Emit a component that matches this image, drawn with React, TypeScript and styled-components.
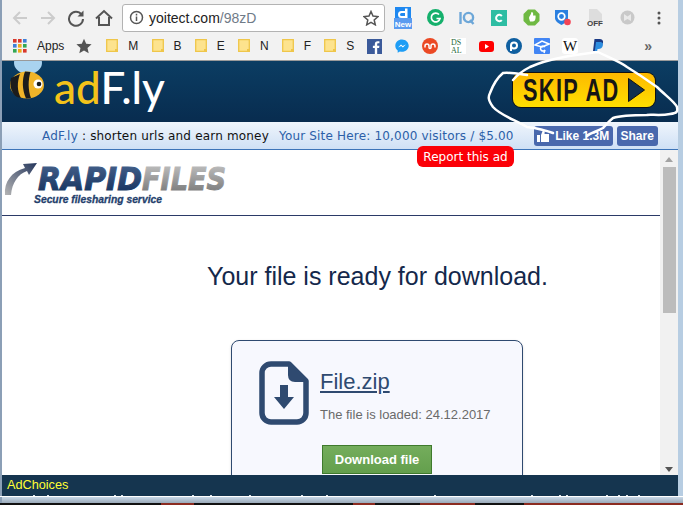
import React from "react";
import styled, { createGlobalStyle } from "styled-components";

const Global = createGlobalStyle`
  html, body { margin: 0; padding: 0; background: #b7cde2; }
  body { width: 683px; height: 505px; overflow: hidden; font-family: "Liberation Sans", Arial, sans-serif; }
  * { box-sizing: border-box; }
`;
const Screen = styled.div`
  position: relative; width: 683px; height: 505px; display: flex; flex-direction: column; overflow: hidden;
  background: linear-gradient(90deg, #8b9fb6 0, #8b9fb6 2px, #b7cde2 2px);
`;
const Win = styled.div`
  margin-left: 2px; width: 676px; height: 496px; display: flex; flex-direction: column; background: #fff; flex: none;
`;
const Chrome = styled.div`
  height: 60px; background: #f2f2f2; display: flex; flex-direction: column; flex: none; padding-top: 3px;
`;
const NavRow = styled.div`
  height: 29px; display: flex; align-items: center; padding-left: 4px; flex: none;
`;
const NavBtn = styled.div`
  width: 28px; height: 28px; display: flex; align-items: center; justify-content: center; flex: none;
`;
const Omni = styled.div`
  width: 263px; height: 28px; margin-left: 4px; background: #fff; border: 1px solid #b3b3b3; border-radius: 3px;
  display: flex; align-items: center; padding: 0 5px 0 6px; flex: none;
  font-size: 14px; color: #222;
`;
const Host = styled.span` margin-left: 5px; `;
const Path = styled.span` color: #6f7b88; flex: 1; `;
const Exts = styled.div` display: flex; margin-left: 2px; align-items: center; `;
const Ext = styled.div`
  width: 32px; height: 28px; display: flex; align-items: center; justify-content: center; flex: none;
`;
const BookRow = styled.div`
  height: 28px; display: flex; align-items: center; padding-left: 11px; font-size: 12px; color: #222; flex: none;
`;
const AppsLabel = styled.span` margin-left: 10px; margin-right: 12px; `;
const StarCell = styled.div` width: 16px; display: flex; margin-right: 14px; `;
const Folders = styled.div` display: flex; gap: 13.2px; `;
const Folder = styled.div` display: flex; align-items: center; gap: 10px; `;
const Favs = styled.div` display: flex; margin-left: 6px; `;
const Fav = styled.div`
  width: 28px; height: 20px; display: flex; align-items: center; justify-content: center; flex: none;
`;
const Chevrons = styled.span`
  margin-left: 32px; color: #666; font-size: 14px; font-weight: bold; letter-spacing: -1px;
`;
const Banner = styled.div`
  height: 62px; flex: none; display: flex; justify-content: space-between;
  background: linear-gradient(180deg, #0b3d63 0, #082c4f 100%); padding: 0 23px 0 6px; overflow: hidden;
  border-top: 1px solid #9a9a9a;
`;
const Brand = styled.div` display: flex; gap: 8px; height: 100%; `;
const Logo = styled.div`
  font-family: "Lato", "Liberation Sans", sans-serif; font-size: 44px; line-height: 44px; font-weight: 500;
  color: #fff; margin-top: 4px;
`;
const Gold = styled.span` color: #f4c31a; `;
const Skip = styled.div`
  width: 142px; height: 34px; margin-top: 12px; border-radius: 8px; background: linear-gradient(180deg, #fdb900, #ffdf00);
  box-shadow: 0 0 0 1px #111; display: flex; align-items: center; padding-left: 10px; gap: 8px; overflow: hidden;
`;
const SkipSlot = styled.div` width: 97px; height: 30px; flex: none; `;
const SkipText = styled.div`
  width: 144px; font-weight: bold; font-size: 32px; line-height: 30px; letter-spacing: 2px; color: #151515; white-space: nowrap;
  transform: scaleX(.68); transform-origin: left;
`;
const Slogan = styled.div`
  height: 28px; flex: none; display: flex; align-items: center; padding-left: 40px;
  background: linear-gradient(180deg, #eff5fc, #cfe0f5); border-bottom: 1px solid #3d74b8;
  font-family: "DejaVu Sans", sans-serif; font-size: 12px; letter-spacing: .18px; color: #111;
`;
const Blue = styled.span` color: #2c5fa8; `;
const SiteAd = styled(Blue)` margin-left: 10px; `;
const FbBtns = styled.div` display: flex; gap: 4px; margin-left: 20px; `;
const FbBtn = styled.div<{ $w: number }>`
  width: ${p => p.$w}px; height: 20px; background: #4968ad; border-radius: 3px; color: #fff;
  font-family: "Liberation Sans", sans-serif; font-weight: bold; font-size: 12px; letter-spacing: 0;
  display: flex; align-items: center; justify-content: center; gap: 6px;
`;
const Report = styled.div`
  position: absolute; left: 417px; top: 146px; width: 97px; height: 21px; background: #fb0007; border-radius: 6px;
  color: #fff; font-family: "DejaVu Sans", sans-serif; font-size: 12px; display: flex; align-items: center; justify-content: center;
`;
const Body = styled.div` flex: 1; min-height: 0; display: flex; overflow: hidden; `;
const Main = styled.div` flex: 1; min-width: 0; display: flex; flex-direction: column; overflow: hidden; `;
const Header = styled.div`
  height: 66px; flex: none; border-bottom: 1px solid #2b3a67; padding: 10px 0 0 1px; display: flex; align-items: flex-start;
`;
const Title = styled.h1`
  margin: 46px 0 0 0; padding-left: 205px; font-size: 25px; line-height: 28px; font-weight: normal; color: #14284b; white-space: nowrap;
`;
const Card = styled.div`
  margin: 50px 0 0 229px; width: 292px; height: 180px; flex: none; background: #f7f8fe; border: 1px solid #2f4a70; border-radius: 8px;
  padding: 20px 0 0 27px; box-shadow: 0 1px 3px #0002;
`;
const FileRow = styled.div` display: flex; gap: 11px; `;
const FileInfo = styled.div` display: flex; flex-direction: column; `;
const FileLink = styled.a`
  font-size: 22px; line-height: 26px; color: #2f4a70; text-decoration: underline; margin-top: 8px;
`;
const Loaded = styled.div` font-size: 13px; line-height: 16px; color: #6a6a6a; margin-top: 12px; `;
const DlBtn = styled.div`
  width: 110px; height: 29px; margin: 20px 0 0 63px; background: linear-gradient(180deg, #74ad5c, #649f4d); border: 1px solid #3f7a2d;
  color: #fff; font-weight: bold; font-size: 13px; display: flex; align-items: center; justify-content: center;
`;
const Scrollbar = styled.div`
  width: 18px; flex: none; background: #f1f1f1; display: flex; flex-direction: column; align-items: center; padding: 7px 0 3px;
`;
const Thumb = styled.div` width: 13px; height: 146px; background: #bcbcbc; margin-top: 5px; `;
const Spacer = styled.div` flex: 1; `;
const Arrow = styled.div<{ $up?: boolean }>`
  width: 0; height: 0; border-left: 4px solid transparent; border-right: 4px solid transparent;
  ${p => p.$up ? "border-bottom: 5px solid #a3a3a3;" : "border-top: 5px solid #555;"}
`;
const AdChoices = styled.div`
  height: 19px; flex: none; background: #15354f; color: #ffff33; font-size: 12.7px; padding-left: 5px; display: flex; align-items: center;
`;
const Specks = styled.svg` display: block; height: 2px; width: 676px; flex: none; background: #15354f; `;
const Edge = styled.div` height: 1px; flex: none; background: #fff; `;
const Fade = styled.div` height: 6px; flex: none; background: linear-gradient(180deg, #c9d9e9, #9aa9b8); margin-left: 2px; `;
const Task = styled.div`
  height: 2px; flex: none;
  background: linear-gradient(90deg, #111 161px, #8b2b20 161px, #8b2b20 194px, #111 194px, #111 353px, #8b2b20 353px, #8b2b20 375px, #111 375px, #111 420px, #8b2b20 420px, #8b2b20 475px, #111 475px, #111 524px, #8b2b20 524px);
`;
const Scribble = styled.svg`
  position: absolute; left: 480px; top: 45px; width: 203px; height: 95px; pointer-events: none;
`;
const BeeBox = styled.svg` flex: none; `;

const Back = () => (
  <svg width="18" height="18" viewBox="0 0 18 18" fill="none" stroke="#ccc" strokeWidth="2"><path d="M16 9H3M9 3L3 9l6 6" /></svg>
);
const Forward = () => (
  <svg width="18" height="18" viewBox="0 0 18 18" fill="none" stroke="#ccc" strokeWidth="2"><path d="M2 9h13M9 3l6 6-6 6" /></svg>
);
const Reload = () => (
  <svg width="18" height="18" viewBox="0 0 18 18" fill="none"><path d="M14.5 5.5A7 7 0 1 0 16 10" stroke="#555" strokeWidth="2" /><path d="M16.5 1.5v6h-6z" fill="#555" /></svg>
);
const Home = () => (
  <svg width="18" height="18" viewBox="0 0 18 18" fill="none" stroke="#555" strokeWidth="2"><path d="M1 9.5L9 2l8 7.5M4 8v8h10V8" /></svg>
);
const Info = () => (
  <svg width="15" height="15" viewBox="0 0 15 15" fill="none"><circle cx="7.5" cy="7.5" r="6" stroke="#555" strokeWidth="1.5" /><path d="M7.5 6.5v4.5M7.5 3.8v1.6" stroke="#555" strokeWidth="1.5" /></svg>
);
const StarO = () => (
  <svg width="16" height="16" viewBox="0 0 16 16" fill="none" stroke="#555" strokeWidth="1.5"><path d="M8 1.5l2 4.6 5 .5-3.8 3.3 1.1 4.9L8 12.3l-4.3 2.5 1.1-4.9L1 6.6l5-.5z" /></svg>
);
const AppsIcon = () => (
  <svg width="14" height="14" viewBox="0 0 14 14">
    {["#d9382c", "#d9382c", "#3c7fd9", "#3c7fd9", "#f0a91c", "#33a853", "#33a853", "#f0a91c", "#d9382c"].map((c, i) => (
      <rect key={i} x={(i % 3) * 5} y={Math.floor(i / 3) * 5} width="3.6" height="3.6" fill={c} />
    ))}
  </svg>
);
const StarF = () => (
  <svg width="16" height="16" viewBox="0 0 16 16" fill="#555"><path d="M8 .8l2.2 5 5.4.5-4.1 3.6 1.2 5.3L8 12.4l-4.7 2.8 1.2-5.3L.4 6.3l5.4-.5z" /></svg>
);
const FolderIcon = () => (
  <svg width="12" height="14" viewBox="0 0 12 14"><path d="M.7.7h10.6v11.6H.7z" fill="#fde38e" stroke="#efc64a" strokeWidth="1.3" /><rect x="9" y="10" width="3" height="3" fill="#efc64a" /></svg>
);
const speckX = [31, 45, 112, 119, 190, 208, 247, 299, 324, 432, 529, 557, 564, 604, 616, 624, 636];

export default function App() {
  return (
    <Screen>
      <Global />
      <Win>
        <Chrome>
          <NavRow>
            <NavBtn><Back /></NavBtn>
            <NavBtn><Forward /></NavBtn>
            <NavBtn><Reload /></NavBtn>
            <NavBtn><Home /></NavBtn>
            <Omni>
              <Info />
              <Host>yoitect.com</Host>
              <Path>/98zD</Path>
              <StarO />
            </Omni>
            <Exts>
              <Ext>
                <svg width="18" height="22" viewBox="0 0 18 22">
                  <rect x="1" width="16" height="12" fill="#1e88f0" />
                  <path d="M11 1.500h2.500V11H7.500a3.500 3.500 0 0 1 0-7H11zM7.500 6a1.500 1.500 0 0 0 0 3H11V6z" fill="#fff" />
                  <rect y="11" width="18" height="11" fill="#5a9bf0" />
                  <text x="9" y="20" textAnchor="middle" fontSize="8" fontWeight="bold" fill="#fff" fontFamily="Liberation Sans">New</text>
                </svg>
              </Ext>
              <Ext>
                <svg width="17" height="17" viewBox="0 0 17 17"><circle cx="8.5" cy="8.5" r="8.5" fill="#15b06c" /><path d="M12 5.5A4.4 4.4 0 1 0 13 9.5H9.5" fill="none" stroke="#fff" strokeWidth="1.7" /></svg>
              </Ext>
              <Ext>
                <svg width="16" height="14" viewBox="0 0 16 14" fill="none" stroke="#6da7d8" strokeWidth="2.4"><path d="M1.5 1v12" /><circle cx="9.5" cy="6.5" r="4.6" /><path d="M11 9l3.5 4" /></svg>
              </Ext>
              <Ext>
                <svg width="16" height="16" viewBox="0 0 16 16"><rect width="16" height="16" fill="#2ebda3" /><path d="M10.8 6a3.2 3.2 0 1 0 0 4" fill="none" stroke="#fff" strokeWidth="2" /></svg>
              </Ext>
              <Ext>
                <svg width="17" height="17" viewBox="0 0 17 17"><path d="M5 .5h7L16.500 5v7L12 16.500H5L.5 12V5z" fill="#6fb943" /><path d="M6 9c0-2 2-3 2.500-6 1.500 0 2 1.500 1.500 3.500h2.500c.5 3-.5 6-2.500 6H7z" fill="#fff" /></svg>
              </Ext>
              <Ext>
                <svg width="18" height="18" viewBox="0 0 18 18"><path d="M1 1h13v8c0 3-3 5-6.500 7C4 14 1 12 1 9z" fill="#2a7fe0" /><circle cx="7.500" cy="7.500" r="3.300" fill="none" stroke="#fff" strokeWidth="1.700" /><circle cx="13.500" cy="13" r="3.300" fill="#f44455" /></svg>
              </Ext>
              <Ext>
                <svg width="16" height="18" viewBox="0 0 16 18"><path d="M2 0h8l5 5v9H2z" fill="#ddd" /><text x="8" y="17" textAnchor="middle" fontSize="8" fontWeight="bold" fill="#444" fontFamily="Liberation Sans">OFF</text></svg>
              </Ext>
              <Ext>
                <svg width="15" height="15" viewBox="0 0 15 15"><circle cx="7.500" cy="7.500" r="7" fill="#c9c9c9" /><path d="M4 4l3.500 2.500L11 4v7l-3.500-2L4 11z" fill="#e9e9e9" /></svg>
              </Ext>
              <Ext>
                <svg width="4" height="14" viewBox="0 0 4 14" fill="#555"><circle cx="2" cy="2" r="1.500" /><circle cx="2" cy="7" r="1.500" /><circle cx="2" cy="12" r="1.500" /></svg>
              </Ext>
            </Exts>
          </NavRow>
          <BookRow>
            <AppsIcon />
            <AppsLabel>Apps</AppsLabel>
            <StarCell><StarF /></StarCell>
            <Folders>
              {["M", "B", "E", "N", "F", "S"].map(l => (
                <Folder key={l}><FolderIcon />{l}</Folder>
              ))}
            </Folders>
            <Favs>
              <Fav>
                <svg width="15" height="15" viewBox="0 0 14 14"><rect width="14" height="14" fill="#3b5a9a" /><path d="M9.500 14V8.500h1.800l.3-2.100H9.500V5c0-.7.3-1 1-1h1.100V2.200C11.200 2.100 10.700 2 10 2 8.300 2 7.300 3 7.300 4.800v1.600H5.500v2.100h1.800V14z" fill="#fff" /></svg>
              </Fav>
              <Fav>
                <svg width="14" height="14" viewBox="0 0 14 14"><path d="M7 .5C3.200.5.300 3.200.300 6.800c0 2 .9 3.700 2.400 4.800v2.100l2.200-1.200c.7.200 1.400.3 2.100.3 3.800 0 6.700-2.700 6.700-6S10.800.5 7 .5z" fill="#1e9df5" /><path d="M3 8.600L6 5.500l1.700 1.600 3.200-1.600-3 3.100L6.200 7z" fill="#fff" /></svg>
              </Fav>
              <Fav>
                <svg width="16" height="16" viewBox="0 0 16 16"><circle cx="8" cy="8" r="8" fill="#eb4924" /><path d="M3 9.500V8a2 2 0 0 1 4 0v1.500a1 1 0 0 0 2 0V8a2 2 0 0 1 4 0v1.500" fill="none" stroke="#fff" strokeWidth="1.500" /></svg>
              </Fav>
              <Fav>
                <svg width="16" height="16" viewBox="0 0 16 16" fontFamily="Liberation Serif" fontSize="8" fill="#2b6b3a"><rect width="16" height="16" fill="#fff" /><text x="1" y="7">DS</text><text x="1" y="15">AL</text></svg>
              </Fav>
              <Fav>
                <svg width="15" height="11" viewBox="0 0 15 11"><rect width="15" height="11" rx="3" fill="#f00" /><path d="M6 3l4 2.500-4 2.500z" fill="#fff" /></svg>
              </Fav>
              <Fav>
                <svg width="16" height="16" viewBox="0 0 16 16"><circle cx="8" cy="8" r="8" fill="#0f5fa0" /><circle cx="8" cy="7.500" r="3" fill="none" stroke="#fff" strokeWidth="2" /><path d="M5 7v6" stroke="#fff" strokeWidth="2" /></svg>
              </Fav>
              <Fav>
                <svg width="16" height="16" viewBox="0 0 16 16"><rect width="16" height="16" rx="1" fill="#4285f4" /><path d="M1 7l7-4 7 3-7 3zM11 9a2.500 2.500 0 1 0 0 3l-1 3" fill="none" stroke="#fff" strokeWidth="1.500" /></svg>
              </Fav>
              <Fav>
                <svg width="16" height="16" viewBox="0 0 16 16"><rect width="16" height="16" rx="3" fill="#fff" /><text x="8" y="13" textAnchor="middle" fontFamily="Liberation Serif" fontSize="15" fill="#111">W</text></svg>
              </Fav>
              <Fav>
                <svg width="12" height="14" viewBox="0 0 12 14"><path d="M2.500 0h5c2.500 0 4 1.500 3.500 3.800C10.500 6.300 8.500 7.500 6 7.500H4.800L4 12H1z" fill="#1a3a85" /><path d="M4 3h5c1.800 1 2.300 2 1.800 3.800C10.200 9 8.500 10 6.500 10H5.500L5 14H2.500z" fill="#2d8ee0" /></svg>
              </Fav>
            </Favs>
            <Chevrons>»</Chevrons>
          </BookRow>
        </Chrome>
        <Banner>
          <Brand>
            <BeeBox width="38" height="38" viewBox="0 0 38 38">
              <ellipse cx="20" cy="2" rx="14" ry="11" fill="#a9d3ef" />
              <ellipse cx="19" cy="24" rx="17" ry="13.500" fill="#f0b429" />
              <path d="M3 17C1 25 4 33 9 36l4 1c-4-7-4-16-1-24zM17 10.500c-3 8-3 18 1 27l5-.5c-3-8-3-18-.5-26z" fill="#1c1c1c" />
              <circle cx="30" cy="23" r="4.500" fill="#fff" /><circle cx="31" cy="23" r="2.300" fill="#1c1c1c" />
            </BeeBox>
            <Logo><Gold>ad</Gold>F.ly</Logo>
          </Brand>
          <Skip>
            <SkipSlot><SkipText>SKIP AD</SkipText></SkipSlot>
            <svg width="17" height="24" viewBox="0 0 17 24"><path d="M.5.5l16 11.500-16 11.500z" fill="#12304f" stroke="#111" strokeWidth="1" /></svg>
          </Skip>
        </Banner>
        <Slogan>
          <Blue>AdF.ly</Blue>&nbsp;: shorten urls and earn money
          <SiteAd>Your Site Here: 10,000 visitors / $5.00</SiteAd>
          <FbBtns>
            <FbBtn $w={79}>
              <svg width="12" height="12" viewBox="0 0 12 12" fill="#fff"><path d="M0 5h3v7H0zM4 5l2-5c1.500 0 2 1 1.500 4H12v8H4z" /></svg>
              Like 1.3M
            </FbBtn>
            <FbBtn $w={41}>Share</FbBtn>
          </FbBtns>
        </Slogan>
        <Body>
          <Main>
            <Header>
              <svg width="226" height="48" viewBox="0 0 226 48">
                <defs>
                  <linearGradient id="rfd" x1="0" y1="0" x2="0" y2="1"><stop offset="0" stopColor="#4a6690" /><stop offset="1" stopColor="#0e2c58" /></linearGradient>
                  <linearGradient id="rfg" x1="0" y1="0" x2="0" y2="1"><stop offset="0" stopColor="#c8c8c8" /><stop offset="1" stopColor="#6f6f6f" /></linearGradient>
                  <linearGradient id="rfa" x1="0" y1="1" x2="1" y2="0"><stop offset="0" stopColor="#b5b5b5" /><stop offset="1" stopColor="#24365c" /></linearGradient>
                </defs>
                <path d="M2 35C1 22 8 12 22 8l-2-4 14-1-8 12-2-4C15 14 9 23 8 35z" fill="url(#rfa)" />
                <text x="35" y="30" fontFamily="DejaVu Sans" fontWeight="bold" fontStyle="italic" fontSize="32" fill="url(#rfd)" stroke="url(#rfd)" strokeWidth="1" textLength="104" lengthAdjust="spacingAndGlyphs">RAPID</text>
                <text x="139" y="30" fontFamily="DejaVu Sans" fontWeight="bold" fontStyle="italic" fontSize="32" fill="url(#rfg)" stroke="url(#rfg)" strokeWidth="1" textLength="84" lengthAdjust="spacingAndGlyphs">FILES</text>
                <text x="31" y="43" fontFamily="Liberation Sans" fontWeight="bold" fontStyle="italic" fontSize="10" fill="#253f6d" stroke="#253f6d" strokeWidth=".3" textLength="128" lengthAdjust="spacingAndGlyphs">Secure filesharing service</text>
              </svg>
            </Header>
            <Title>Your file is ready for download.</Title>
            <Card>
              <FileRow>
                <svg width="50" height="64" viewBox="0 0 50 64">
                  <path d="M12 3H30L47 20V52a9 9 0 0 1-9 9H12a9 9 0 0 1-9-9V12a9 9 0 0 1 9-9z" fill="none" stroke="#2f4a70" strokeWidth="5.500" strokeLinejoin="round" />
                  <path d="M29 3L47 21H36Q29 21 29 14z" fill="#2f4a70" />
                  <path d="M21 24h8v12h6L25 48 15 36h6z" fill="#2f4a70" />
                </svg>
                <FileInfo>
                  <FileLink>File.zip</FileLink>
                  <Loaded>The file is loaded: 24.12.2017</Loaded>
                </FileInfo>
              </FileRow>
              <DlBtn>Download file</DlBtn>
            </Card>
          </Main>
          <Scrollbar>
            <Arrow $up />
            <Thumb />
            <Spacer />
            <Arrow />
          </Scrollbar>
        </Body>
        <AdChoices>AdChoices</AdChoices>
        <Specks viewBox="0 0 676 2">
          {speckX.map(x => <rect key={x} x={x} y="1" width="2" height="1" fill="#dfe7ee" />)}
        </Specks>
      </Win>
      <Edge />
      <Fade />
      <Task />
      <Report>Report this ad</Report>
      <Scribble viewBox="480 45 203 95" fill="none" stroke="#fff" strokeWidth="2.500" strokeLinecap="round">
        <path d="M513 80C520 72 528 68 530 67C550 58 575 55 598 52C610 58 620 62 627 67C640 75 650 82 657 87C665 95 675 102 677 107C678 112 677 113 670 114C660 116 650 114 647 115C635 115 622 115 613 118C608 122 605 126 603 128C596 132 590 133 587 136" />
        <path d="M553 133C545 130 535 128 527 127C515 120 500 115 493 107C488 100 488 97 490 93C493 85 497 78 503 73C510 72 520 74 527 75" />
      </Scribble>
    </Screen>
  );
}
